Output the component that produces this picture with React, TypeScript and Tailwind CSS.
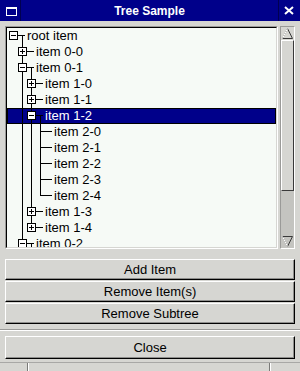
import { ReactNode } from "react"

type Guide = [number, "full" | "half"]

type TreeRow = {
  label: string
  level: number
  box?: "plus" | "minus"
  guides: Guide[]
  child?: boolean
  selected?: boolean
}

const rows: TreeRow[] = [
  { label: "root item", level: 0, box: "minus", guides: [], child: true },
  { label: "item 0-0", level: 1, box: "plus", guides: [[1, "full"]] },
  { label: "item 0-1", level: 1, box: "minus", guides: [[1, "full"]], child: true },
  { label: "item 1-0", level: 2, box: "plus", guides: [[1, "full"], [2, "full"]] },
  { label: "item 1-1", level: 2, box: "plus", guides: [[1, "full"], [2, "full"]] },
  { label: "item 1-2", level: 2, box: "minus", guides: [[1, "full"], [2, "full"]], child: true, selected: true },
  { label: "item 2-0", level: 3, guides: [[1, "full"], [2, "full"], [3, "full"]] },
  { label: "item 2-1", level: 3, guides: [[1, "full"], [2, "full"], [3, "full"]] },
  { label: "item 2-2", level: 3, guides: [[1, "full"], [2, "full"], [3, "full"]] },
  { label: "item 2-3", level: 3, guides: [[1, "full"], [2, "full"], [3, "full"]] },
  { label: "item 2-4", level: 3, guides: [[1, "full"], [2, "full"], [3, "half"]] },
  { label: "item 1-3", level: 2, box: "plus", guides: [[1, "full"], [2, "full"]] },
  { label: "item 1-4", level: 2, box: "plus", guides: [[1, "full"], [2, "half"]] },
  { label: "item 0-2", level: 1, box: "minus", guides: [[1, "full"]], child: true },
]

function Gutter({ row }: { row: TreeRow }) {
  const L = row.level
  const w = 20 + 9 * L
  return (
    <svg width={w} height={16} className="shrink-0" shapeRendering="crispEdges">
      {row.guides.map(([a, kind]) => (
        <line
          key={a}
          x1={6 + 9 * a + 0.5}
          x2={6 + 9 * a + 0.5}
          y1={0}
          y2={kind === "full" ? 16 : 8}
          stroke="#000"
        />
      ))}
      {row.child ? <line x1={15 + 9 * L + 0.5} x2={15 + 9 * L + 0.5} y1={7} y2={16} stroke="#000" /> : null}
      {row.box ? (
        <>
          <line x1={11 + 9 * L} x2={18 + 9 * L} y1={7.5} y2={7.5} stroke="#000" />
          <rect x={2 + 9 * L + 0.5} y={3.5} width={8} height={8} fill="#fff" stroke="#000" />
          <line x1={4 + 9 * L} x2={9 + 9 * L} y1={7.5} y2={7.5} stroke="#000" />
          {row.box === "plus" ? (
            <line x1={6 + 9 * L + 0.5} x2={6 + 9 * L + 0.5} y1={5} y2={10} stroke="#000" />
          ) : null}
        </>
      ) : (
        <line x1={6 + 9 * L} x2={18 + 9 * L} y1={7.5} y2={7.5} stroke="#000" />
      )}
    </svg>
  )
}

function Button({ children, tall }: { children: ReactNode; tall?: boolean }) {
  return (
    <button
      type="button"
      className={`flex w-full items-center justify-center border-t border-l border-t-white border-l-white border-b border-r border-b-black border-r-black bg-[#d6d6d2] text-[13px] text-black shadow-[inset_-1px_-1px_0_#8e8e8c] ${
        tall ? "h-[23px]" : "h-[21px]"
      }`}
    >
      {children}
    </button>
  )
}

export default function App() {
  return (
    <div className="flex h-[371px] w-[300px] flex-col overflow-hidden bg-[#d6d6d2] font-['Liberation_Sans',Arial,sans-serif] text-black">
      <header className="flex h-[21px] shrink-0 items-stretch bg-[#00008a] text-white">
        <div className="flex w-[21px] items-start border-r border-r-[#000050] pl-[6px] pt-[7px]">
          <svg width="11" height="9" shapeRendering="crispEdges">
            <rect x="0.5" y="0.5" width="10" height="8" fill="none" stroke="#fff" />
            <line x1="0" x2="11" y1="1.5" y2="1.5" stroke="#fff" />
          </svg>
        </div>
        <div className="flex flex-1 items-center justify-center text-[12px] font-bold">Tree Sample</div>
        <div className="flex w-[22px] items-start border-l border-l-[#000050] pl-[5px] pt-[6px]">
          <svg width="10" height="9">
            <path d="M1 1 L9 8 M9 1 L1 8" stroke="#fff" strokeWidth="2" />
          </svg>
        </div>
      </header>

      <div className="flex flex-1 flex-col px-[5px] pt-[5px]">
        <div className="flex h-[223px] gap-[2px]">
          <div className="flex-1 border-t border-l border-t-[#9a9a98] border-l-[#9a9a98] border-b border-r border-b-white border-r-white">
            <div className="h-full border-t border-l border-black border-b border-r border-b-[#d6d6d2] border-r-[#d6d6d2] bg-[#f6faf6]">
              <div className="h-[219px] overflow-hidden">
                {rows.map((row) => (
                  <div
                    key={row.label}
                    className={`flex h-[16px] items-center text-[13px] leading-[16px] ${
                      row.selected ? "bg-[#00008a] text-white shadow-[inset_0_0_0_1px_#000]" : ""
                    }`}
                  >
                    <Gutter row={row} />
                    <span className="whitespace-pre">{row.label}</span>
                  </div>
                ))}
              </div>
            </div>
          </div>

          <div className="flex w-[15px] flex-col border-t border-l border-t-[#9a9a98] border-l-[#9a9a98] border-b border-r border-b-white border-r-white bg-[#c4c4c0]">
            <svg width="13" height="13" className="shrink-0">
              <rect x="0" y="0" width="13" height="13" fill="#d6d6d2" />
              <path d="M6.5 1.5 L11.5 11.5 L1.5 11.5 Z" fill="#d6d6d2" stroke="#3a3a3a" />
              <path d="M6.5 1.5 L1.5 11.5" stroke="#fff" />
            </svg>
            <div className="h-[151px] border-t border-l border-t-white border-l-white border-b border-r border-b-[#3a3a3a] border-r-[#3a3a3a] bg-[#d6d6d2]" />
            <div className="flex-1" />
            <svg width="13" height="13" className="shrink-0">
              <path d="M1.5 1.5 L11.5 1.5 L6.5 11.5 Z" fill="#c4c4c0" stroke="#3a3a3a" />
              <path d="M1.5 1.5 L6.5 11.5" stroke="#fff" />
            </svg>
          </div>
        </div>

        <div className="mt-[10px] flex flex-col gap-[1px]">
          <Button>Add Item</Button>
          <Button>Remove Item(s)</Button>
          <Button>Remove Subtree</Button>
        </div>
      </div>

      <div className="mx-0 mt-[5px] h-[2px] shrink-0 border-t border-t-[#9a9a98] border-b border-b-white" />

      <div className="shrink-0 px-[5px] pt-[5px]">
        <Button tall>Close</Button>
      </div>

      <div className="mt-[3px] flex h-[9px] shrink-0 border-t border-t-[#a8a8a6]">
        <div className="w-[28px] border-r border-r-[#7a7a78]" />
        <div className="w-[242px] border-l border-l-white border-r border-r-[#7a7a78]" />
        <div className="flex-1 border-l border-l-white" />
      </div>
    </div>
  )
}
